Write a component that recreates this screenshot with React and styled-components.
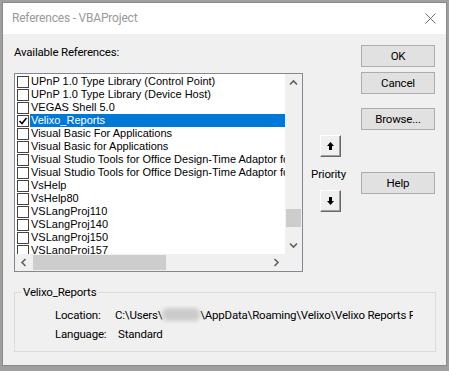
import React from 'react';
import styled, { createGlobalStyle } from 'styled-components';

const UI_FONT = `Roboto, "Noto Sans", sans-serif`;
const LIST_FONT = `"Liberation Sans", Arial, sans-serif`;

const GlobalStyle = createGlobalStyle`
	html, body {
		margin: 0;
		padding: 0;
		background: #9f9f9f;
	}
	body {
		width: 449px;
		height: 371px;
		overflow: hidden;
	}
`;

const references = [
	{ name: 'UPnP 1.0 Type Library (Control Point)' },
	{ name: 'UPnP 1.0 Type Library (Device Host)' },
	{ name: 'VEGAS Shell 5.0' },
	{ name: 'Velixo_Reports', checked: true, selected: true },
	{ name: 'Visual Basic For Applications' },
	{ name: 'Visual Basic for Applications' },
	{ name: 'Visual Studio Tools for Office Design-Time Adaptor for Excel' },
	{ name: 'Visual Studio Tools for Office Design-Time Adaptor for Word' },
	{ name: 'VsHelp' },
	{ name: 'VsHelp80' },
	{ name: 'VSLangProj110' },
	{ name: 'VSLangProj140' },
	{ name: 'VSLangProj150' },
	{ name: 'VSLangProj157' },
];

function Chevron({ dir }) {
	const rot = { up: 0, down: 180, left: 270, right: 90 }[dir];
	return (
		<svg width="9" height="9" viewBox="0 0 9 9" style={{ transform: `rotate(${rot}deg)` }}>
			<path d="M1 6.5 L4.5 3 L8 6.5" fill="none" stroke="#606060" strokeWidth="1.6" />
		</svg>
	);
}

function Arrow({ down }) {
	return (
		<svg width="7" height="8" viewBox="0 0 7 8" style={down ? { transform: 'rotate(180deg)' } : null}>
			<path d="M3.5 0 L7 4 H5 V8 H2 V4 H0 Z" fill="#000" />
		</svg>
	);
}

export default function App() {
	return (
		<>
			<GlobalStyle />
			<Window>
				<TitleBar>
					<Title>References - VBAProject</Title>
					<CloseIcon width="11" height="11" viewBox="0 0 11 11">
						<path d="M0.5 0.5 L10.5 10.5 M10.5 0.5 L0.5 10.5" stroke="#6e6e6e" strokeWidth="1" />
					</CloseIcon>
				</TitleBar>
				<Body>
					<MainRow>
						<ListColumn>
							<Label>Available References:</Label>
							<ListBox>
								<ListItems>
									{references.map((ref, i) => (
										<Item key={i}>
											<CheckBox>
												{ref.checked && (
													<svg width="10" height="10" viewBox="0 0 10 10">
														<path d="M1.5 5 L4 7.5 L8.5 2" fill="none" stroke="#000" strokeWidth="1.6" />
													</svg>
												)}
											</CheckBox>
											<ItemText $selected={ref.selected}>{ref.name}</ItemText>
										</Item>
									))}
								</ListItems>
								<VScroll>
									<ScrollArrow><Chevron dir="up" /></ScrollArrow>
									<VTrack>
										<VThumb style={{ marginTop: 118 }} />
									</VTrack>
									<ScrollArrow><Chevron dir="down" /></ScrollArrow>
								</VScroll>
								<HScroll>
									<ScrollArrow><Chevron dir="left" /></ScrollArrow>
									<HTrack>
										<HThumb style={{ width: 133 }} />
									</HTrack>
									<ScrollArrow><Chevron dir="right" /></ScrollArrow>
								</HScroll>
								<Corner />
							</ListBox>
						</ListColumn>

						<PriorityColumn>
							<ArrowButton><Arrow /></ArrowButton>
							<PriorityLabel>Priority</PriorityLabel>
							<ArrowButton><Arrow down /></ArrowButton>
						</PriorityColumn>

						<ButtonColumn>
							<Button>OK</Button>
							<Button $gap={5}>Cancel</Button>
							<Button $gap={14}>Browse...</Button>
							<Button $gap={42}>Help</Button>
						</ButtonColumn>
					</MainRow>

					<GroupBox>
						<Legend>Velixo_Reports</Legend>
						<InfoGrid>
							<InfoLabel>Location:</InfoLabel>
							<InfoValue>
								C:\Users\<Blurred />\AppData\Roaming\Velixo\Velixo Reports Pro
							</InfoValue>
							<InfoLabel>Language:</InfoLabel>
							<InfoValue $indent={3}>Standard</InfoValue>
						</InfoGrid>
					</GroupBox>
				</Body>
			</Window>
		</>
	);
}

const Window = styled.div`
	margin: 2px 0 0 2px;
	width: 443px;
	height: 362px;
	border: 1px solid #8a8a8a;
	background: #f0f0f0;
	display: flex;
	flex-direction: column;
	font-family: ${UI_FONT};
	font-size: 11.5px;
	letter-spacing: -0.2px;
	color: #000;
`;

const TitleBar = styled.div`
	height: 31px;
	background: #fff;
	display: flex;
	align-items: center;
	justify-content: space-between;
	padding: 0 10px 0 9px;
`;

const Title = styled.span`
	color: #999;
	font-size: 12px;
	line-height: 16px;
	margin-top: -1px;
`;

const CloseIcon = styled.svg`
	margin-top: -1px;
`;

const Body = styled.div`
	flex: 1;
	display: flex;
	flex-direction: column;
	padding: 11px 10px 0 11px;
`;

const MainRow = styled.div`
	display: flex;
`;

const ListColumn = styled.div`
	display: flex;
	flex-direction: column;
`;

const Label = styled.div`
	line-height: 15px;
	height: 15px;
	margin-bottom: 13px;
`;

const ListBox = styled.div`
	width: 287px;
	height: 197px;
	border: 1px solid #828790;
	background: #fff;
	display: grid;
	grid-template-columns: 1fr 17px;
	grid-template-rows: 1fr 17px;
`;

const ListItems = styled.div`
	overflow: hidden;
	padding-top: 1px;
	font-family: ${LIST_FONT};
	font-size: 11px;
	letter-spacing: 0;
`;

const Item = styled.div`
	display: flex;
	height: 13px;
`;

const CheckBox = styled.div`
	width: 10px;
	height: 10px;
	margin: 1px 0 0 2px;
	border: 1px solid #444;
	background: #fff;
	display: flex;
	align-items: center;
	justify-content: center;
	flex-shrink: 0;
`;

const ItemText = styled.div`
	flex: 1;
	margin-left: 1px;
	padding-left: 1px;
	line-height: 13px;
	white-space: nowrap;
	overflow: hidden;
	background: ${p => (p.$selected ? '#0078d7' : 'transparent')};
	color: ${p => (p.$selected ? '#fff' : '#000')};
`;

const VScroll = styled.div`
	background: #f0f0f0;
	display: flex;
	flex-direction: column;
`;

const HScroll = styled.div`
	background: #f0f0f0;
	display: flex;
`;

const ScrollArrow = styled.div`
	width: 17px;
	height: 17px;
	display: flex;
	align-items: center;
	justify-content: center;
	flex-shrink: 0;
`;

const VTrack = styled.div`
	flex: 1;
	padding: 0 1px;
`;

const VThumb = styled.div`
	height: 18px;
	background: #cdcdcd;
`;

const HTrack = styled.div`
	flex: 1;
	padding: 1px 0 1px 1px;
`;

const HThumb = styled.div`
	height: 100%;
	background: #cdcdcd;
`;

const Corner = styled.div`
	background: #f0f0f0;
`;

const PriorityColumn = styled.div`
	width: 48px;
	margin-left: 3px;
	padding-top: 90px;
	display: flex;
	flex-direction: column;
	align-items: center;
`;

const ArrowButton = styled.div`
	width: 19px;
	height: 20px;
	background: #f0f0f0;
	border-top: 1px solid #fff;
	border-left: 1px solid #fff;
	border-right: 1px solid #696969;
	border-bottom: 1px solid #696969;
	box-shadow: inset -1px -1px 0 #a0a0a0;
	display: flex;
	align-items: center;
	justify-content: center;
`;

const PriorityLabel = styled.div`
	margin: 9px 0 8px -3px;
	line-height: 16px;
	white-space: nowrap;
`;

const ButtonColumn = styled.div`
	margin-left: 7px;
	display: flex;
	flex-direction: column;
`;

const Button = styled.div`
	width: 72px;
	height: 20px;
	margin-top: ${p => p.$gap || 0}px;
	border: 1px solid #adadad;
	background: #e1e1e1;
	display: flex;
	align-items: center;
	justify-content: center;
	line-height: 16px;
`;

const GroupBox = styled.fieldset`
	margin: 12px 0 0 0;
	width: 422px;
	padding: 5px 0 8px 0;
	border: 1px solid #dcdcdc;
	box-sizing: border-box;
	height: 68px;
`;

const Legend = styled.legend`
	margin-left: 6px;
	padding: 0 2px;
	line-height: 16px;
`;

const InfoGrid = styled.div`
	display: grid;
	grid-template-columns: 60px 1fr;
	grid-auto-rows: 19px;
	align-items: center;
	padding-left: 40px;
`;

const InfoLabel = styled.div`
	line-height: 18px;
	white-space: nowrap;
`;

const InfoValue = styled.div`
	line-height: 18px;
	padding-left: ${p => p.$indent || 0}px;
	width: 298px;
	white-space: nowrap;
	overflow: hidden;
`;

const Blurred = styled.span`
	display: inline-block;
	width: 38px;
	height: 13px;
	vertical-align: -2px;
	background: #cbcbcb;
	border-radius: 6px;
	filter: blur(2px);
`;
